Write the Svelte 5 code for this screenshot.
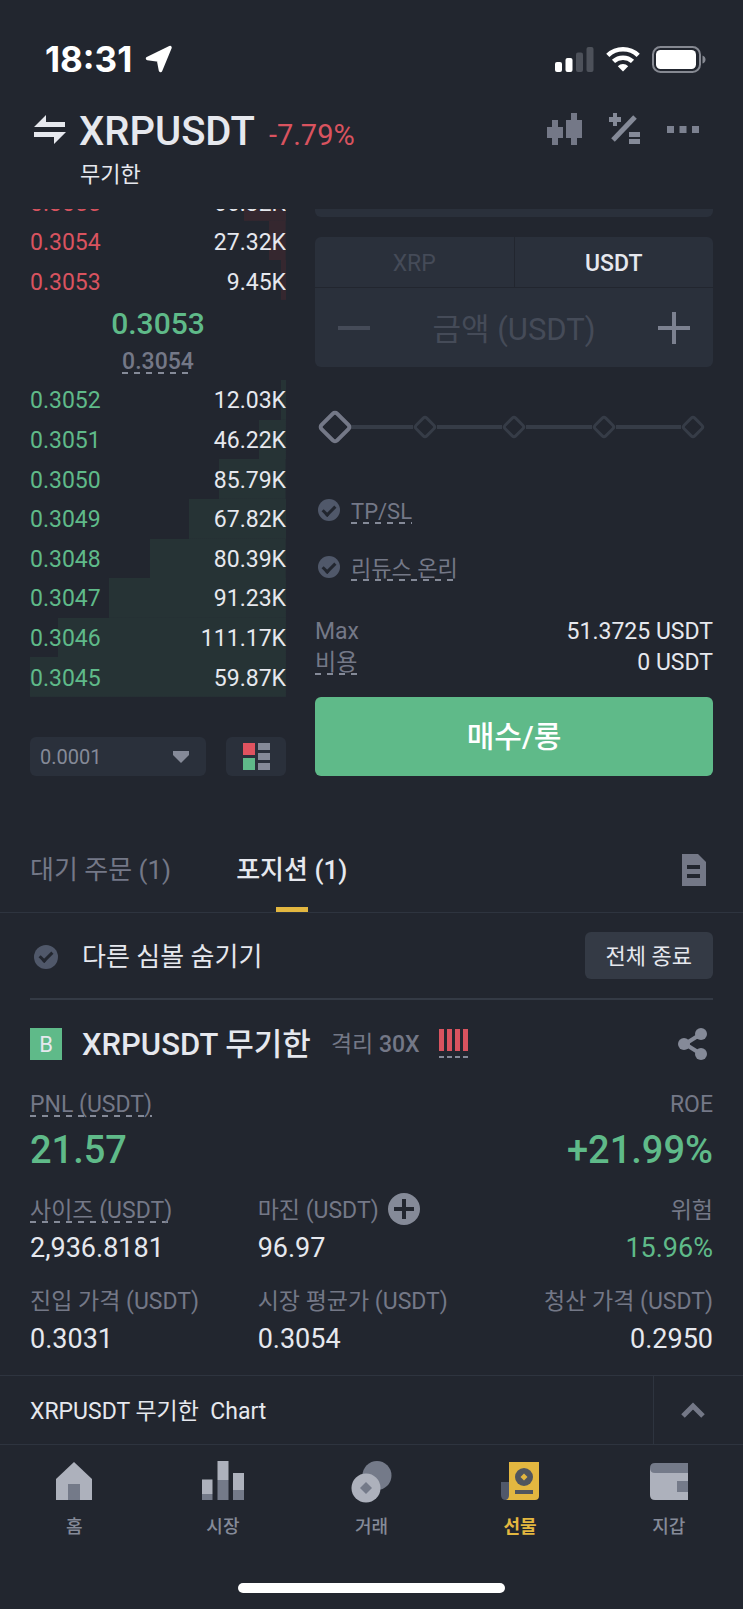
<script>
  let unit = $state('USDT');
  let tab = $state('positions');
  let amount = $state('');
  let leverage = $state(0);
  let tick = $state('0.0001');
  let tpsl = $state(false);
  let reduceOnly = $state(false);
  let hideOthers = $state(false);

  // depth = width of the bar behind the row, in percent
  const asks = [
    { price: '0.3055', size: '66.32K', depth: 16.5 },
    { price: '0.3054', size: '27.32K', depth: 6.5 },
    { price: '0.3053', size: '9.45K', depth: 2 },
  ];

  const bids = [
    { price: '0.3052', size: '12.03K', depth: 2 },
    { price: '0.3051', size: '46.22K', depth: 10.5 },
    { price: '0.3050', size: '85.79K', depth: 26 },
    { price: '0.3049', size: '67.82K', depth: 38 },
    { price: '0.3048', size: '80.39K', depth: 53 },
    { price: '0.3047', size: '91.23K', depth: 69 },
    { price: '0.3046', size: '111.17K', depth: 89 },
    { price: '0.3045', size: '59.87K', depth: 100 },
  ];

  const stats = [
    { label: '사이즈 (USDT)', value: '2,936.8181', dashed: true },
    { label: '마진 (USDT)', value: '96.97', add: true },
    { label: '위험', value: '15.96%', green: true },
    { label: '진입 가격 (USDT)', value: '0.3031' },
    { label: '시장 평균가 (USDT)', value: '0.3054' },
    { label: '청산 가격 (USDT)', value: '0.2950' },
  ];
</script>

<div class="app">
  <div class="status">
    <span class="time">18:31</span>
    <svg class="location" width="28" height="28" viewBox="0 0 28 28">
      <path d="M25 2.500L15.500 25.500L13.500 15L2.500 13.500Z" fill="#fff" stroke="#fff" stroke-width="3.500" stroke-linejoin="round" />
    </svg>
    <div class="status-icons">
      <svg width="39" height="25" viewBox="0 0 39 25">
        <rect x="0" y="15" width="7" height="10" rx="2" fill="#fff" />
        <rect x="10.500" y="11" width="7" height="14" rx="2" fill="#fff" />
        <rect x="21" y="5.500" width="7" height="19.500" rx="2" fill="#4d515a" />
        <rect x="31.500" y="0" width="7" height="25" rx="2" fill="#4d515a" />
      </svg>
      <svg width="34" height="26" viewBox="0 0 34 26">
        <g fill="none" stroke="#fff" stroke-width="4.600">
          <path d="M1.800 9.300A22 22 0 0 1 32.200 9.300" />
          <path d="M7.500 15.400A14 14 0 0 1 26.500 15.400" />
        </g>
        <path d="M17 25.500L11.800 20.200A7.500 7.500 0 0 1 22.200 20.200Z" fill="#fff" />
      </svg>
      <svg width="54" height="27" viewBox="0 0 54 27">
        <rect x="1" y="1" width="47" height="25" rx="7.500" fill="none" stroke="#868992" stroke-width="2" />
        <rect x="4" y="4" width="40" height="19" rx="4.500" fill="#fff" />
        <path d="M50.500 9.500Q53.500 10.500 53.500 13.500T50.500 17.500Z" fill="#868992" />
      </svg>
    </div>
  </div>

  <header>
    <div class="title-row">
      <button class="swap" aria-label="Switch market">
        <svg width="32" height="30" viewBox="0 0 32 30" fill="#e6e8ee">
          <path d="M0 12L12 0V7H31V12Z" />
          <path d="M32 17L20 29V22H0V17Z" />
        </svg>
      </button>
      <h1>XRPUSDT</h1>
      <span class="change">-7.79%</span>
      <div class="tools">
        <button aria-label="Chart">
          <svg width="36" height="34" viewBox="0 0 36 34" fill="#747887">
            <path d="M5 7H11V14H16V25H11V32H5V25H0V14H5Z" />
            <path d="M24 0H30V7H35V25H30V32H24V25H19V7H24Z" />
          </svg>
        </button>
        <button aria-label="Calculator">
          <svg width="32" height="34" viewBox="0 0 32 34">
            <path d="M4 0H8V4H12V9H8V13H4V9H0V4H4Z" fill="#858a98" />
            <path d="M26 4L4 27" stroke="#858a98" stroke-width="5" />
            <path d="M20 19H31V24H20ZM20 26H31V31H20Z" fill="#858a98" />
          </svg>
        </button>
        <button aria-label="More">
          <svg width="32" height="9" viewBox="0 0 32 9" fill="#7c8190">
            <path d="M0 0H7V7H0ZM12.500 0H19.500V7H12.500ZM25 0H32V7H25Z" />
          </svg>
        </button>
      </div>
    </div>
    <p class="contract">무기한</p>
  </header>

  <main>
    <section class="trade">
      <div class="book">
        <div class="asks">
          <table>
            <tbody>
              {#each asks as row (row.price)}
                <tr style="--depth: {row.depth}%">
                  <td class="price">{row.price}</td>
                  <td class="size">{row.size}</td>
                </tr>
              {/each}
            </tbody>
          </table>
        </div>
        <div class="last">
          <strong>0.3053</strong>
          <span class="dashed">0.3054</span>
        </div>
        <table class="bids">
          <tbody>
            {#each bids as row (row.price)}
              <tr style="--depth: {row.depth}%">
                <td class="price">{row.price}</td>
                <td class="size">{row.size}</td>
              </tr>
            {/each}
          </tbody>
        </table>
        <div class="book-tools">
          <div class="tick">
            <select bind:value={tick} aria-label="Tick size">
              <option>0.0001</option>
              <option>0.001</option>
              <option>0.01</option>
            </select>
            <svg width="16" height="12" viewBox="0 0 16 12"><path d="M0 0H16V4L8 12L0 4Z" fill="#858a98" /></svg>
          </div>
          <button class="layout" aria-label="Order book layout">
            <svg width="27" height="27" viewBox="0 0 27 27">
              <rect width="12" height="12" fill="#e0535f" />
              <rect y="15" width="12" height="12" fill="#5fba89" />
              <path d="M15 0H27V7H15ZM15 10H27V17H15ZM15 20H27V27H15Z" fill="#858a98" />
            </svg>
          </button>
        </div>
      </div>

      <div class="order">
        <div class="field-end"></div>
        <div class="amount">
          <div class="units">
            <button class:active={unit === 'XRP'} onclick={() => (unit = 'XRP')}>XRP</button>
            <button class:active={unit === 'USDT'} onclick={() => (unit = 'USDT')}>USDT</button>
          </div>
          <div class="stepper">
            <button aria-label="Decrease">
              <svg width="32" height="32" viewBox="0 0 32 32"><path d="M0 16H32" stroke="#454b58" stroke-width="4" /></svg>
            </button>
            <input type="text" placeholder="금액 (USDT)" aria-label="금액 (USDT)" bind:value={amount} />
            <button aria-label="Increase">
              <svg width="32" height="32" viewBox="0 0 32 32"><path d="M0 16H32M16 0V32" stroke="#7c8190" stroke-width="4" /></svg>
            </button>
          </div>
        </div>

        <div class="slider">
          {#each [0, 25, 50, 75, 100] as stop (stop)}
            {#if stop > 0}<span class="line"></span>{/if}
            <span class="stop" class:current={stop === leverage}><i></i></span>
          {/each}
          <input type="range" min="0" max="100" step="25" aria-label="Amount percent" bind:value={leverage} />
        </div>

        <label class="option">
          <input type="checkbox" bind:checked={tpsl} />
          <span class="dashed">TP/SL</span>
        </label>
        <label class="option">
          <input type="checkbox" bind:checked={reduceOnly} />
          <span class="dashed">리듀스 온리</span>
        </label>

        <dl class="summary">
          <div><dt>Max</dt><dd>51.3725 USDT</dd></div>
          <div><dt><span class="dashed">비용</span></dt><dd>0 USDT</dd></div>
        </dl>
        <button class="buy">매수/롱</button>
      </div>
    </section>

    <nav class="tabs">
      <button class:active={tab === 'orders'} onclick={() => (tab = 'orders')}>대기 주문 (1)</button>
      <button class:active={tab === 'positions'} onclick={() => (tab = 'positions')}>포지션 (1)</button>
      <button class="history" aria-label="History">
        <svg width="24" height="32" viewBox="0 0 24 32">
          <path d="M0 0H16L24 8V32H0Z" fill="#747887" />
          <path d="M5 11H18V15H5ZM5 20H18V24H5Z" fill="#22262f" />
        </svg>
      </button>
    </nav>

    <div class="filter">
      <label>
        <input type="checkbox" bind:checked={hideOthers} />
        다른 심볼 숨기기
      </label>
      <button>전체 종료</button>
    </div>

    <section class="position">
      <div class="position-head">
        <span class="side">B</span>
        <h2>XRPUSDT 무기한</h2>
        <span class="mode">격리 <b>30X</b></span>
        <svg width="31" height="30" viewBox="0 0 31 30">
          <path d="M2.500 0V22M10.500 0V22M18.500 0V22M26.500 0V22" stroke="#d9535f" stroke-width="5" />
          <path d="M0 28H31" stroke="#858a98" stroke-width="2" stroke-dasharray="5 3" />
        </svg>
        <button class="share" aria-label="Share">
          <svg width="30" height="32" viewBox="0 0 30 32">
            <path d="M23 6L7 16L23 26" fill="none" stroke="#858a98" stroke-width="4" />
            <circle cx="23" cy="6" r="6" fill="#858a98" />
            <circle cx="6" cy="16" r="6" fill="#858a98" />
            <circle cx="23" cy="26" r="6" fill="#858a98" />
          </svg>
        </button>
      </div>

      <dl class="pnl">
        <div><dt><span class="dashed">PNL (USDT)</span></dt><dd>21.57</dd></div>
        <div><dt>ROE</dt><dd>+21.99%</dd></div>
      </dl>

      <dl class="stats">
        {#each stats as stat (stat.label)}
          <div>
            <dt>
              <span class:dashed={stat.dashed}>{stat.label}</span>
              {#if stat.add}
                <button aria-label="Add margin">
                  <svg width="32" height="32" viewBox="0 0 32 32">
                    <circle cx="16" cy="16" r="16" fill="#858a98" />
                    <path d="M6 16H26M16 6V26" stroke="#22262f" stroke-width="4" />
                  </svg>
                </button>
              {/if}
            </dt>
            <dd class:green={stat.green}>{stat.value}</dd>
          </div>
        {/each}
      </dl>
    </section>
  </main>

  <div class="chart-bar">
    <span>XRPUSDT 무기한&nbsp; Chart</span>
    <button aria-label="Open chart">
      <svg width="24" height="16" viewBox="0 0 24 16"><path d="M2 14L12 4L22 14" fill="none" stroke="#747887" stroke-width="5" /></svg>
    </button>
  </div>

  <nav class="bottom">
    <a href="#home">
      <svg width="42" height="40" viewBox="0 0 42 40">
        <path d="M3 18L21 1L39 18V39H3Z" fill="#adb1bc" />
        <rect x="15" y="23" width="12" height="16" fill="#747a89" />
      </svg>
      홈
    </a>
    <a href="#markets">
      <svg width="42" height="40" viewBox="0 0 42 40">
        <path d="M0 18.500H10.500V33H0ZM15.500 0H26.500V19H15.500ZM31 12H42V29H31Z" fill="#adb1bc" />
        <path d="M0 33H10.500V39H0ZM15.500 19H26.500V39H15.500ZM31 29H42V39H31Z" fill="#747a89" />
      </svg>
      시장
    </a>
    <a href="#trade">
      <svg width="42" height="42" viewBox="0 0 42 42">
        <circle cx="27" cy="14.500" r="14.500" fill="#747a89" />
        <circle cx="16" cy="27" r="14.500" fill="#adb1bc" />
        <path d="M16 21L22 27L16 33L10 27Z" fill="#747a89" />
      </svg>
      거래
    </a>
    <a href="#futures" class="active">
      <svg width="42" height="40" viewBox="0 0 42 40">
        <path d="M2 21H10V39H7Q2 39 2 34Z" fill="#50586a" />
        <path d="M10 1H40V35Q40 39 36 39H7Q10 38 10 34Z" fill="#e3b740" />
        <circle cx="25" cy="16" r="9" fill="#50555e" />
        <path d="M25 12.500L28.500 16L25 19.500L21.500 16Z" fill="#e3b740" />
        <rect x="16" y="29" width="18" height="4" fill="#50555e" />
      </svg>
      선물
    </a>
    <a href="#wallet">
      <svg width="42" height="40" viewBox="0 0 42 40">
        <path d="M2 7H40V39H7Q2 39 2 34Z" fill="#adb1bc" />
        <path d="M7 2H40V12H7Q2 12 2 7Q2 2 7 2Z" fill="#747a89" />
        <rect x="29" y="20" width="11" height="11" fill="#747a89" />
      </svg>
      지갑
    </a>
  </nav>
  <div class="home-indicator"></div>
</div>

<style>
  :global(body) {
    background: #22262f;
  }

  .app {
    color: #e6e8ee;
    font-family: Roboto, 'Noto Sans CJK KR', sans-serif;
    font-size: 23px;
    line-height: 30px;
  }

  button, input, select {
    font: inherit;
    color: inherit;
    background: none;
    border: 0;
    margin: 0;
    padding: 0;
  }

  h1, h2, p, dl, dd {
    margin: 0;
  }

  svg {
    display: block;
    flex-shrink: 0;
  }

  .dashed {
    display: inline-block;
    padding-top: 3px;
    line-height: 24px;
    background: repeating-linear-gradient(to right, #858a98 0 6px, transparent 6px 12px) left bottom / 100% 2px no-repeat;
  }

  .green {
    color: #5fba89;
  }

  /* status bar */
  .status {
    display: flex;
    align-items: center;
    height: 96px;
    box-sizing: border-box;
    padding: 22px 37px 0 45px;
  }

  .time {
    font-family: Inter, sans-serif;
    font-size: 35px;
    font-weight: 700;
    color: #fff;
  }

  .location {
    margin-left: 13px;
  }

  .status-icons {
    display: flex;
    align-items: center;
    gap: 12px;
    margin-left: auto;
  }

  /* header */
  header {
    padding: 12px 44px 19px 34px;
  }

  .title-row {
    display: flex;
    align-items: center;
    height: 44px;
  }

  h1 {
    margin: 4px 0 0 13px;
    font-size: 40px;
    font-weight: 500;
  }

  .change {
    margin: 10px 0 0 14px;
    font-size: 29px;
    color: #d9535f;
  }

  .tools {
    display: flex;
    align-items: center;
    gap: 26px;
    margin-left: auto;
  }

  .contract {
    margin: 8px 0 0 46px;
    font-size: 22px;
  }

  /* order book and order form */
  .trade {
    display: grid;
    grid-template-columns: minmax(0, 256fr) minmax(0, 398fr);
    gap: 29px;
    padding: 0 30px;
  }

  .asks {
    display: flex;
    flex-direction: column;
    justify-content: flex-end;
    height: 91px;
    overflow: hidden;
  }

  table {
    width: 100%;
    border-spacing: 0;
  }

  td {
    height: 39px;
    box-sizing: border-box;
    padding: 3px 0 0;
  }

  tr {
    background: linear-gradient(var(--bar), var(--bar)) right / var(--depth) 100% no-repeat;
  }

  .asks table {
    flex-shrink: 0;
    height: 119px;
    --bar: #35272f;
  }

  .asks td {
    padding-top: 6px;
  }

  .bids {
    height: 317px;
    --bar: #263335;
  }

  .asks .price {
    color: #d9535f;
  }

  .bids .price {
    color: #5fba89;
  }

  .size {
    text-align: right;
  }

  .last {
    display: flex;
    flex-direction: column;
    align-items: center;
    height: 80px;
  }

  .last strong {
    line-height: 47px;
    font-size: 30px;
    font-weight: 500;
    color: #5fba89;
  }

  .last span {
    font-weight: 500;
    color: #747887;
  }

  .book-tools {
    display: flex;
    gap: 20px;
    height: 39px;
    margin-top: 40px;
  }

  .tick {
    display: flex;
    flex: 1;
    align-items: center;
    padding-right: 17px;
    border-radius: 6px;
    background: #2a303b;
  }

  .tick select {
    flex: 1;
    appearance: none;
    padding-left: 10px;
    font-size: 20px;
    color: #858a98;
  }

  .layout {
    display: flex;
    align-items: center;
    justify-content: center;
    width: 60px;
    border-radius: 6px;
    background: #2a303b;
  }

  .field-end {
    height: 8px;
    border-radius: 0 0 6px 6px;
    background: #2a303b;
  }

  .amount {
    display: flex;
    flex-direction: column;
    gap: 1px;
    margin-top: 20px;
    border-radius: 6px;
    overflow: hidden;
  }

  .units {
    display: grid;
    grid-template-columns: 1fr 1fr;
    gap: 1px;
  }

  .units button {
    height: 50px;
    padding-top: 3px;
    background: #2a303b;
    color: #454b58;
  }

  .units .active {
    font-weight: 500;
    color: #e6e8ee;
  }

  .stepper {
    display: flex;
    align-items: center;
    height: 79px;
    padding: 0 23px;
    background: #2a303b;
  }

  .stepper input {
    flex: 1;
    min-width: 0;
    padding-top: 3px;
    font-size: 31px;
    text-align: center;
    outline: none;
  }

  .stepper input::placeholder {
    color: #454b58;
    opacity: 1;
  }

  .slider {
    position: relative;
    display: flex;
    align-items: center;
    height: 34px;
    margin-top: 43px;
    padding: 0 8px;
  }

  .slider input {
    position: absolute;
    inset: 0;
    opacity: 0;
  }

  .line {
    flex: 1;
    height: 4px;
    background: #363c47;
  }

  .stop {
    display: flex;
    align-items: center;
    justify-content: center;
    width: 24px;
    height: 24px;
  }

  .stop i {
    flex-shrink: 0;
    width: 18px;
    height: 18px;
    box-sizing: border-box;
    border: 3px solid #363c47;
    border-radius: 4px;
    background: #22262f;
    transform: rotate(45deg);
  }

  .stop.current i {
    width: 26px;
    height: 26px;
    border: 4px solid #747887;
    border-radius: 5px;
  }

  .option {
    display: flex;
    align-items: center;
    gap: 11px;
    height: 32px;
    margin-top: 25px;
    padding-left: 3px;
    font-size: 22px;
    color: #747887;
  }

  .slider + .option {
    margin-top: 50px;
  }

  input[type='checkbox'] {
    display: flex;
    justify-content: center;
    width: 22px;
    height: 22px;
    flex-shrink: 0;
    appearance: none;
    border-radius: 50%;
    background: #50586a;
  }

  input[type='checkbox']::before {
    content: '';
    width: 5px;
    height: 10px;
    margin-top: 4px;
    border: solid #22262f;
    border-width: 0 3px 3px 0;
    transform: rotate(45deg);
  }

  .summary {
    margin-top: 33px;
    line-height: 31px;
  }

  .summary div {
    display: flex;
    justify-content: space-between;
    height: 31px;
  }

  dt {
    color: #747887;
  }

  .buy {
    width: 100%;
    height: 79px;
    margin-top: 19px;
    border-radius: 6px;
    background: #5fba89;
    font-size: 30px;
    font-weight: 500;
    color: #fff;
  }

  /* tabs */
  .tabs {
    display: flex;
    gap: 65px;
    height: 85px;
    margin-top: 51px;
    padding: 0 37px 0 30px;
    border-bottom: 1px solid #2e343f;
  }

  .tabs button {
    position: relative;
    font-size: 26px;
    color: #747887;
  }

  .tabs .active {
    font-weight: 500;
    color: #e6e8ee;
  }

  .tabs .active::after {
    content: '';
    position: absolute;
    bottom: 0;
    left: calc(50% - 16px);
    width: 32px;
    height: 5px;
    background: #e3b740;
  }

  .tabs .history {
    margin-left: auto;
  }

  .filter {
    display: flex;
    align-items: center;
    justify-content: space-between;
    height: 85px;
    margin: 0 30px;
    border-bottom: 2px solid #343a45;
  }

  .filter label {
    display: flex;
    align-items: center;
    gap: 24px;
    padding: 2px 0 0 4px;
    font-size: 26px;
  }

  .filter input[type='checkbox'] {
    width: 24px;
    height: 24px;
  }

  .filter button {
    height: 47px;
    padding: 2px 21px 0;
    border-radius: 6px;
    background: #343a45;
    font-size: 22px;
  }

  /* open position */
  .position {
    padding: 0 30px 20px;
  }

  .position-head {
    display: flex;
    align-items: center;
    height: 88px;
  }

  .side {
    width: 32px;
    height: 32px;
    background: #5fba89;
    font-size: 22px;
    line-height: 34px;
    text-align: center;
  }

  h2 {
    margin: 0 20px;
    padding-top: 2px;
    font-size: 31px;
    font-weight: 500;
  }

  .mode {
    margin-right: 19px;
    padding-top: 2px;
    color: #747887;
  }

  .mode b {
    font-weight: 500;
  }

  .share {
    margin: 0 5px 0 auto;
  }

  .pnl {
    display: flex;
    justify-content: space-between;
  }

  .pnl dt {
    height: 33px;
    line-height: 33px;
  }

  .pnl dd {
    margin-top: 7px;
    font-size: 38px;
    line-height: 44px;
    font-weight: 500;
    color: #5fba89;
  }

  .pnl div:last-child {
    text-align: right;
  }

  .stats {
    display: grid;
    grid-template-columns: 1fr 1fr 1fr;
    row-gap: 21px;
    margin-top: 22px;
  }

  .stats > div:nth-child(3n) {
    text-align: right;
  }

  .stats dt {
    display: flex;
    align-items: center;
    gap: 9px;
    height: 30px;
    white-space: nowrap;
  }

  .stats > div:nth-child(3n) dt {
    justify-content: flex-end;
  }

  .stats dt span {
    padding-top: 3px;
    line-height: 24px;
  }

  .stats dd {
    margin-top: 8px;
    font-size: 27px;
    line-height: 32px;
  }

  /* bottom bars */
  .chart-bar {
    display: flex;
    align-items: stretch;
    height: 68px;
    border: solid #2e343f;
    border-width: 1px 0;
  }

  .chart-bar span {
    flex: 1;
    padding-left: 30px;
    line-height: 72px;
  }

  .chart-bar button {
    display: flex;
    align-items: center;
    justify-content: center;
    width: 90px;
    padding-right: 12px;
    border-left: 1px solid #2e343f;
  }

  .bottom {
    display: grid;
    grid-template-columns: repeat(5, 1fr);
    padding-top: 16px;
  }

  .bottom a {
    display: flex;
    flex-direction: column;
    align-items: center;
    justify-content: space-between;
    height: 78px;
    font-size: 18px;
    line-height: 24px;
    font-weight: 500;
    color: #858a98;
    text-decoration: none;
  }

  .bottom .active {
    font-weight: 700;
    color: #e3b740;
  }

  .home-indicator {
    width: 36%;
    height: 10px;
    margin: 44px auto 0;
    border-radius: 5px;
    background: #fff;
  }
</style>
